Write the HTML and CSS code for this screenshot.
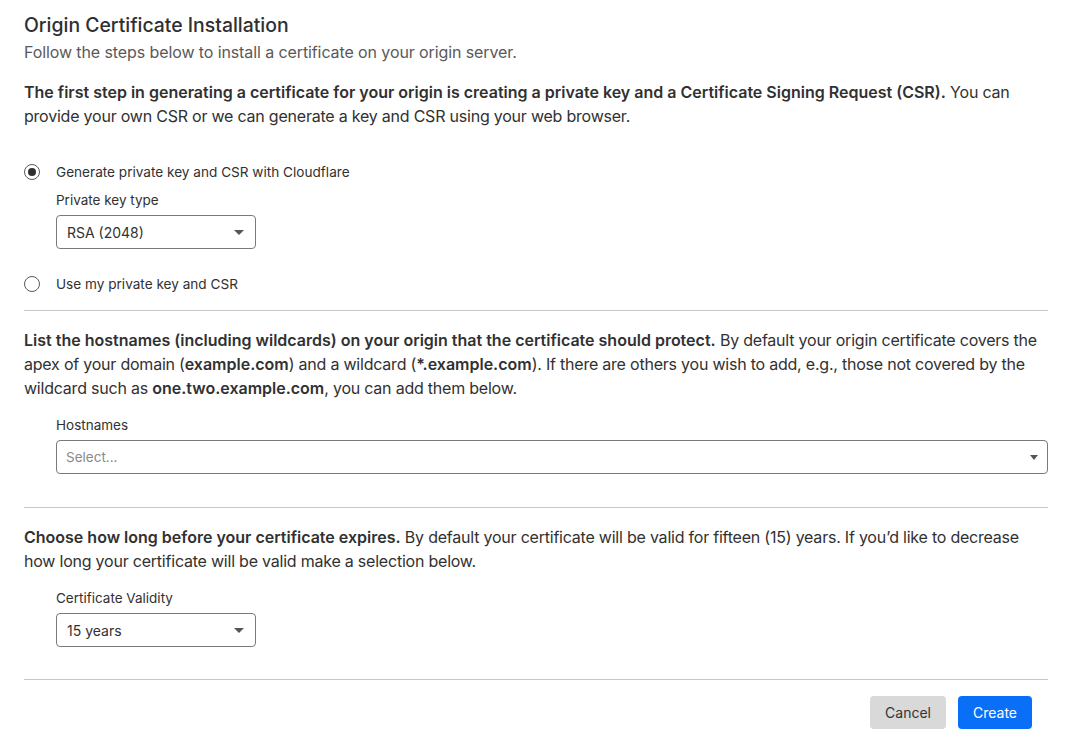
FILE: index.html
```html
<!DOCTYPE html>
<html>
<head>
    <title>Origin Certificate Installation</title>
    <meta name="viewport" content="width=device-width, initial-scale=1.0">
    <link rel="stylesheet" href="styles.css">
</head>
<body>
    <div class="page">
        <h1 class="title">Origin Certificate Installation</h1>
        <p class="subtitle">Follow the steps below to install a certificate on your origin server.</p>

        <section class="step">
            <p class="lead"><b>The first step in generating a certificate for your origin is creating a private key and a Certificate Signing Request (CSR).</b> You can provide your own CSR or we can generate a key and CSR using your web browser.</p>

            <div class="radio-row">
                <span class="radio checked"></span>
                <span>Generate private key and CSR with Cloudflare</span>
            </div>
            <div class="field field-key">
                <label class="field-label">Private key type</label>
                <div class="select small">
                    <span>RSA (2048)</span>
                    <span class="caret"></span>
                </div>
            </div>
            <div class="radio-row second">
                <span class="radio"></span>
                <span>Use my private key and CSR</span>
            </div>
        </section>

        <section class="step">
            <p class="lead"><b>List the hostnames (including wildcards) on your origin that the certificate should protect.</b> By default your origin certificate covers the apex of your domain (<b>example.com</b>) and a wildcard (<b>*.example.com</b>). If there are others you wish to add, e.g., those not covered by the wildcard such as <b>one.two.example.com</b>, you can add them below.</p>
            <div class="field field-hosts">
                <label class="field-label">Hostnames</label>
                <div class="select wide">
                    <span class="placeholder">Select...</span>
                    <span class="caret"></span>
                </div>
            </div>
        </section>

        <section class="step">
            <p class="lead"><b>Choose how long before your certificate expires.</b> By default your certificate will be valid for fifteen (15) years. If you’d like to decrease how long your certificate will be valid make a selection below.</p>
            <div class="field field-validity">
                <label class="field-label">Certificate Validity</label>
                <div class="select small">
                    <span>15 years</span>
                    <span class="caret"></span>
                </div>
            </div>
        </section>

        <div class="actions">
            <button class="btn cancel">Cancel</button>
            <button class="btn create">Create</button>
        </div>
    </div>
</body>
</html>
```

FILE: styles.css
```css
body {
    margin: 0;
    background-color: #ffffff;
    color: #313131;
    font-family: Inter, "Noto Sans", sans-serif;
}

.page {
    padding: 13px 31px 0 24px;
}

.title {
    font-size: 19.4px;
    font-weight: 500;
    margin: 0;
    line-height: 24px;
    color: #2f2f2f;
}

.subtitle {
    font-size: 16px;
    color: #595959;
    margin: 5px 0 1px 0;
    line-height: 20px;
    letter-spacing: -0.1px;
}

.step {
    border-bottom: 1px solid #c8c8c8;
}

.lead {
    font-size: 16px;
    line-height: 24px;
    margin: 0;
    padding-top: 17px;
    letter-spacing: -0.22px;
}
.lead b {
    font-weight: 600;
    letter-spacing: 0;
}

.radio-row {
    display: flex;
    align-items: center;
    gap: 16px;
    font-size: 13.6px;
    margin-top: 34px;
    height: 20px;
}
.radio-row.second {
    margin-top: 25px;
    margin-bottom: 16px;
}
.radio {
    width: 16px;
    height: 16px;
    border: 1px solid #595959;
    border-radius: 50%;
    box-sizing: border-box;
    display: flex;
    align-items: center;
    justify-content: center;
}
.radio.checked::after {
    content: "";
    width: 8px;
    height: 8px;
    border-radius: 50%;
    background-color: #2f2f2f;
}

.field {
    margin-left: 32px;
    padding-top: 17px;
    padding-bottom: 33px;
}
.field-key {
    padding-top: 9px;
    padding-bottom: 0;
}
.field-hosts {
    padding-top: 16px;
    padding-bottom: 33px;
}
.field-validity {
    padding-top: 16px;
    padding-bottom: 32px;
}
.field-label {
    display: block;
    font-size: 13.5px;
    line-height: 18px;
    margin-bottom: 6px;
}

.select {
    display: flex;
    align-items: center;
    justify-content: space-between;
    height: 34px;
    box-sizing: border-box;
    border: 1px solid #7a7a7a;
    border-radius: 4px;
    padding: 0 11px 0 10px;
    font-size: 14px;
}
.select.small {
    width: 200px;
}
.placeholder {
    color: #8a8a8a;
}
.select.wide .placeholder {
    margin-left: -1px;
    font-size: 13.5px;
}
.caret {
    width: 0;
    height: 0;
    border-left: 5px solid transparent;
    border-right: 5px solid transparent;
    border-top: 5px solid #555555;
}
.select.wide .caret {
    border-left-width: 4.5px;
    border-right-width: 4.5px;
    border-top-width: 5px;
    margin-right: -2px;
}

.actions {
    display: flex;
    justify-content: flex-end;
    gap: 12px;
    padding: 16px 16px 0 0;
}
.btn {
    height: 33px;
    border: none;
    border-radius: 4px;
    font-family: Inter, "Noto Sans", sans-serif;
    font-size: 14px;
    padding: 0 15px;
    cursor: pointer;
}
.cancel {
    background-color: #d9d9d9;
    color: #333333;
}
.create {
    background-color: #0a6ff7;
    color: #ffffff;
}
```
